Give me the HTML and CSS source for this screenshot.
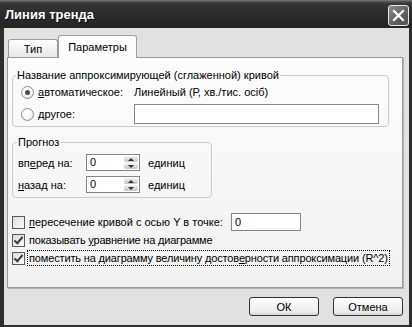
FILE: index.html
```html
<!DOCTYPE html>
<html lang="ru">
<head>
    <meta charset="UTF-8">
    <title>Линия тренда</title>
    <link rel="stylesheet" href="styles.css">
</head>
<body>
    <div class="window">
        <div class="titlebar">
            <span class="title">Линия тренда</span>
            <button class="close" aria-label="Закрыть">
                <svg width="13" height="13" viewBox="0 0 13 13">
                    <path d="M2 2 L11 11 M11 2 L2 11" stroke="#fff" stroke-width="2.2" stroke-linecap="square"/>
                </svg>
            </button>
        </div>

        <div class="client">
            <div class="tabs">
                <div class="tab">Тип</div>
                <div class="tab active">Параметры</div>
            </div>

            <div class="panel">
                <fieldset class="group name-group">
                    <legend>Название аппроксимирующей (сглаженной) кривой</legend>
                    <div class="row">
                        <span class="radio checked"></span>
                        <span class="opt-label"><u>а</u>втоматическое:</span>
                        <span>Линейный (Р, хв./тис. осіб)</span>
                    </div>
                    <div class="row">
                        <span class="radio"></span>
                        <span class="opt-label"><u>д</u>ругое:</span>
                        <span class="textbox wide"></span>
                    </div>
                </fieldset>

                <fieldset class="group forecast">
                    <legend>Прогноз</legend>
                    <div class="row spin-row">
                        <span class="field-label">вп<u>е</u>ред на:</span>
                        <span class="spinner">
                            <span class="value">0</span>
                            <span class="spin"><span class="arrow up"></span><span class="arrow down"></span></span>
                        </span>
                        <span class="unit">единиц</span>
                    </div>
                    <div class="row spin-row">
                        <span class="field-label"><u>н</u>азад на:</span>
                        <span class="spinner">
                            <span class="value">0</span>
                            <span class="spin"><span class="arrow up"></span><span class="arrow down"></span></span>
                        </span>
                        <span class="unit">единиц</span>
                    </div>
                </fieldset>

                <div class="checks">
                    <div class="check-row">
                        <span class="checkbox"></span>
                        <span class="check-label"><u>п</u>ересечение кривой с осью Y в точке:</span>
                        <span class="textbox small">0</span>
                    </div>
                    <div class="check-row">
                        <span class="checkbox checked"></span>
                        <span class="check-label tight">показывать <u>у</u>равнение на диаграмме</span>
                    </div>
                    <div class="check-row">
                        <span class="checkbox checked"></span>
                        <span class="check-label focused">поместить на диаграмму величину достов<u>е</u>рности аппроксимации (R^2)</span>
                    </div>
                </div>
            </div>

            <div class="buttons">
                <button class="btn">ОК</button>
                <button class="btn">Отмена</button>
            </div>
        </div>
    </div>
</body>
</html>
```

FILE: styles.css
```css
* {
    box-sizing: border-box;
}

body {
    margin: 0;
    font-family: 'Liberation Sans', Arial, sans-serif;
    font-size: 11px;
    color: #000;
    background: #fff;
}

.window {
    width: 412px;
    height: 327px;
    display: flex;
    flex-direction: column;
    background: #2e2e2e;
    padding-bottom: 2px;
}

/* title bar */
.titlebar {
    height: 28px;
    flex: none;
    display: flex;
    justify-content: space-between;
    padding: 0 3px 0 5px;
    background: linear-gradient(#7a7a7a 0, #4a4a4a 2px, #353535 4px, #2c2c2c 50%, #242424 100%);
}

.title {
    color: #fff;
    font-weight: bold;
    font-size: 13px;
    line-height: 29px;
    text-shadow: 1px 1px 0 #111;
}

.close {
    width: 21px;
    height: 21px;
    margin-top: 5px;
    padding: 0;
    display: flex;
    align-items: center;
    justify-content: center;
    border: 1px solid #e8e8e8;
    border-radius: 3px;
    background: linear-gradient(135deg, #8c8c8c 0%, #5e5e5e 60%, #505050 100%);
}

/* client area */
.client {
    flex: 1;
    margin: 0 3px 0 4px;
    padding: 7px 6px 0 3px;
    background: #e1e1e1;
    display: flex;
    flex-direction: column;
}

.tabs {
    display: flex;
    align-items: flex-end;
    margin: 0 0 -1px 1px;
    position: relative;
    z-index: 1;
}

.tab {
    width: 50px;
    height: 18px;
    margin-bottom: 1px;
    border: 1px solid #9a9a9a;
    border-bottom: none;
    border-radius: 3px 3px 0 0;
    background: linear-gradient(#fdfdfd, #e8e8e8);
    text-align: center;
    line-height: 18px;
}

.tab.active {
    width: 79px;
    height: 23px;
    margin-bottom: 0;
    border-color: #a0a0a0;
    background: #fcfcfc;
    line-height: 22px;
}

.panel {
    height: 231px;
    border: 1px solid #9a9a9a;
    box-shadow: 1px 1px 0 #b4b4b4;
    background: linear-gradient(#fcfcfc, #f1f1f1);
    padding: 10px 4px 0 4px;
}

/* group boxes */
.group {
    margin: 0;
    border: 1px solid #cbcbcb;
    border-radius: 4px;
}

.group legend {
    padding: 0 1px;
    line-height: 14px;
}

.name-group {
    width: 377px;
    padding: 0 6px 2px 8px;
}

.name-group legend {
    margin-left: -5px;
}

.forecast {
    width: 200px;
    margin-top: 8px;
    padding: 4px 6px 3px 5px;
}

.forecast legend {
    margin-left: -1px;
}

.row {
    height: 20px;
    display: flex;
    align-items: center;
}

.row + .row {
    margin-top: 2px;
}

.spin-row {
    height: 19px;
}

.spin-row + .spin-row {
    margin-top: 3px;
}

.radio {
    width: 13px;
    height: 13px;
    border: 1px solid #8e8e8e;
    border-radius: 50%;
    background: radial-gradient(circle at 40% 40%, #fff 30%, #dcdcdc 100%);
    margin-right: 4px;
    display: flex;
    align-items: center;
    justify-content: center;
}

.radio.checked::after {
    content: '';
    width: 5px;
    height: 5px;
    border-radius: 50%;
    background: #4a4a4a;
}

.opt-label {
    width: 96px;
}

.textbox {
    height: 20px;
    border: 1px solid #858585;
    background: #fff;
    padding: 0 3px;
    line-height: 17px;
}

.textbox.wide {
    width: 245px;
}

.textbox.small {
    width: 70px;
    height: 18px;
    line-height: 16px;
    margin-left: 8px;
}

/* spinners */
.field-label {
    width: 68px;
}

.spinner {
    width: 54px;
    height: 17px;
    border: 1px solid #858585;
    background: #fff;
    display: flex;
}

.spinner .value {
    flex: 1;
    padding-left: 3px;
    line-height: 15px;
}

.spin {
    width: 16px;
    display: flex;
    flex-direction: column;
    gap: 1px;
    padding: 1px;
}

.arrow {
    flex: 1;
    border-radius: 2px;
    background: linear-gradient(#f2f2f2, #c4c4c4);
    display: flex;
    align-items: center;
    justify-content: center;
}

.arrow::after {
    content: '';
    border-left: 3px solid transparent;
    border-right: 3px solid transparent;
}

.arrow.up::after {
    border-bottom: 3px solid #333;
}

.arrow.down::after {
    border-top: 3px solid #333;
}

.unit {
    margin-left: 8px;
}

/* check boxes */
.checks {
    margin-top: 15px;
}

.check-row {
    height: 18px;
    display: flex;
    align-items: center;
}

.checkbox {
    flex: none;
    width: 13px;
    height: 13px;
    border: 1px solid #5a5a5a;
    background: linear-gradient(135deg, #dcdcdc, #fafafa);
    position: relative;
}

.checkbox.checked::after {
    content: '';
    position: absolute;
    left: 3px;
    top: 0px;
    width: 3px;
    height: 7px;
    border: solid #3a3a3a;
    border-width: 0 2px 2px 0;
    transform: rotate(40deg);
}

.check-label {
    margin-left: 4px;
    white-space: nowrap;
}

.check-label.tight {
    letter-spacing: -0.2px;
}

.check-label.focused {
    margin-left: 2px;
    padding: 1px 1px;
    border: 1px dotted #000;
    letter-spacing: -0.15px;
}

/* buttons */
.buttons {
    display: flex;
    justify-content: flex-end;
    gap: 14px;
    margin-top: 9px;
}

.btn {
    width: 70px;
    height: 19px;
    padding: 0;
    border: 1px solid #303030;
    border-radius: 3px;
    background: linear-gradient(#fefefe, #ececec 80%, #d6d6d6);
    font-family: inherit;
    font-size: 11px;
    color: #000;
}
```
